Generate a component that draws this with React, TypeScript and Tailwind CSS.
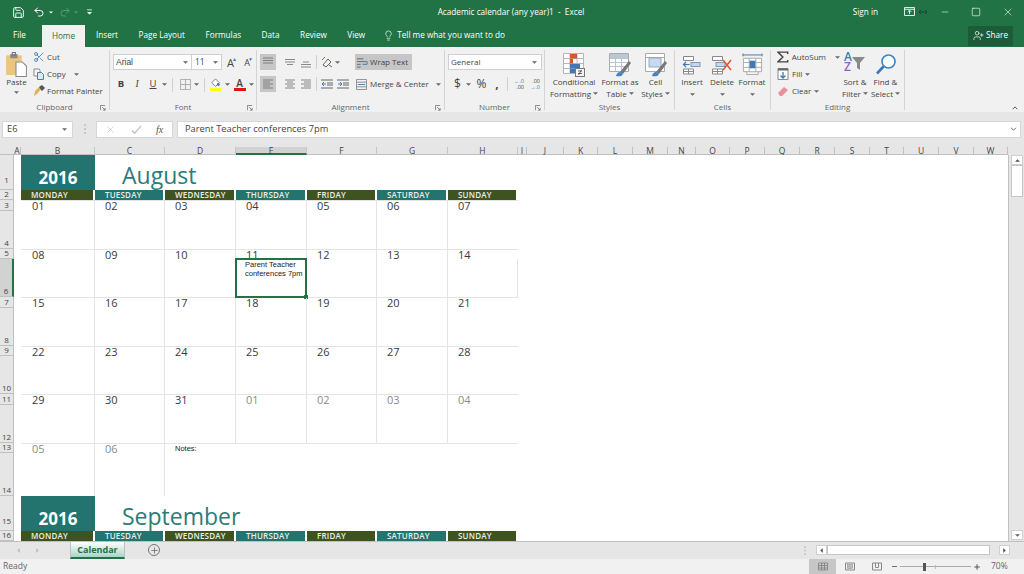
import { Lightbulb, Minus, Plus, Redo2, Save, Scissors, Square, Undo2, UserPlus, X } from "lucide-react";
import type { ReactNode } from "react";

const dayWidths = ["w-[74px]", "w-[70px]", "w-[71px]", "w-[71px]", "w-[70px]", "w-[71px]", "w-[70px]"];
const dayNames = ["MONDAY", "TUESDAY", "WEDNESDAY", "THURSDAY", "FRIDAY", "SATURDAY", "SUNDAY"];
const otherCols: [string, string][] = [
  ["I", "w-[9px]"], ["J", "w-[37px]"], ["K", "w-[34px]"], ["L", "w-[35px]"], ["M", "w-[35px]"], ["N", "w-[28px]"],
  ["O", "w-[34px]"], ["P", "w-[35px]"], ["Q", "w-[35px]"], ["R", "w-[35px]"], ["S", "w-[35px]"], ["T", "w-[34px]"],
  ["U", "w-[35px]"], ["V", "w-[35px]"], ["W", "w-[34px]"],
];
const rowHeights = [
  "h-[35px]", "h-[10px]", "h-[11px]", "h-[38px]", "h-[10px]", "h-[38px]", "h-[11px]", "h-[38px]",
  "h-[10px]", "h-[38px]", "h-[11px]", "h-[38px]", "h-[10px]", "h-[43px]", "h-[35px]", "h-[10px]",
];
const weeks = [
  ["01", "02", "03", "04", "05", "06", "07"],
  ["08", "09", "10", "11", "12", "13", "14"],
  ["15", "16", "17", "18", "19", "20", "21"],
  ["22", "23", "24", "25", "26", "27", "28"],
  ["29", "30", "31", "01", "02", "03", "04"],
];

function Caret({ className = "" }: { className?: string }) {
  return (
    <svg viewBox="0 0 6 3" className={`h-[3px] w-[5px] shrink-0 ${className}`}>
      <path d="M0 0h6L3 3z" fill="#666" />
    </svg>
  );
}

function LaunchMark() {
  return (
    <svg viewBox="0 0 7 7" className="absolute -bottom-[1px] right-[3px] h-[6px] w-[6px]">
      <path d="M.5 6V.5H6M2.5 2.5L6 6M6 3.5V6H3.5" fill="none" stroke="#777" strokeWidth="1" />
    </svg>
  );
}

function Group({ label, width, launcher, children }: { label: string; width: string; launcher?: boolean; children: ReactNode }) {
  return (
    <div className={`relative flex h-[60px] flex-col border-r border-[#d4d4d4] ${width}`}>
      <div className="flex h-[50px] flex-1">{children}</div>
      <div className="-mb-[2px] text-center text-[8px] leading-[10px] text-[#666]">{label}</div>
      {launcher && <LaunchMark />}
    </div>
  );
}

function AlignIcon({ rows, active, width = "w-[16px]" }: { rows: [number, number, number][]; active?: boolean; width?: string }) {
  return (
    <div className={`flex h-[16px] items-center justify-center ${width} ${active ? "bg-[#c6c6c6]" : ""}`}>
      <svg viewBox="0 0 12 12" className="h-[12px] w-[12px]">
        {rows.map(([x1, x2, y]) => (
          <path key={`${x1}-${y}`} d={`M${x1} ${y}H${x2}`} stroke="#6d6d6d" strokeWidth=".8" />
        ))}
      </svg>
    </div>
  );
}

function BigButton({ icon, lines, width }: { icon: ReactNode; lines: string[]; width: string }) {
  return (
    <div className={`flex flex-col items-center pt-[2px] ${width}`}>
      <div className="flex h-[25px] items-center justify-center">{icon}</div>
      <div className="flex h-[10px] items-center whitespace-nowrap text-[8px] text-[#444]">{lines[0]}</div>
      <div className="mt-[1px] flex h-[11px] items-center gap-[2px] whitespace-nowrap text-[8px] text-[#444]">
        {lines[1]}
        <Caret />
      </div>
    </div>
  );
}

function Ribbon() {
  const vsep = <div className="mx-[5px] h-[14px] w-px bg-[#d0d0d0]" />;
  return (
    <div className="flex h-[65px] items-start bg-[#f1f1f1] pt-[3px]">
      <Group label="Clipboard" width="w-[110px]" launcher>
        <div className="flex w-[33px] flex-col items-center pt-[2px]">
          <svg viewBox="0 0 20 24" className="h-[25px] w-[21px]">
            <rect x="0" y="3" width="15" height="19" rx="1" fill="#eec57f" />
            <rect x="4" y="2" width="7" height="4" fill="#8b8b8b" />
            <rect x="6" y="0.5" width="3" height="2.5" fill="none" stroke="#777" />
            <path d="M9.5 9.5h6l4 4v10h-10z" fill="#fff" stroke="#888" />
          </svg>
          <span className="-mt-[1px] text-[8px] leading-[11px] text-[#444]">Paste</span>
          <Caret className="mt-[4px]" />
        </div>
        <div className="-mt-[1px] flex flex-col gap-[1px] text-[8px] text-[#444]">
          <div className="flex h-[16px] items-center gap-[2px]">
            <Scissors className="h-[12px] w-[12px] text-[#3f78b5]" strokeWidth={1.6} />
            <span>Cut</span>
          </div>
          <div className="flex h-[16px] items-center gap-[2px]">
            <svg viewBox="0 0 12 12" className="h-[12px] w-[12px]">
              <path d="M1 1h5l1 1v2M1 1v7h3" fill="#fff" stroke="#888" />
              <path d="M4.5 4.5h4l2 2v5h-6z" fill="#dbe8f5" stroke="#4c7fb5" />
            </svg>
            <span>Copy</span>
            <Caret className="ml-[6px]" />
          </div>
          <div className="flex h-[16px] items-center gap-[2px]">
            <svg viewBox="0 0 12 12" className="h-[12px] w-[12px]">
              <path d="M1 11l3-2 4-5-2-2-4 4z" fill="#e3b15b" />
              <path d="M6 2l3-2 3 3-3 3-1-1z" fill="#555" />
            </svg>
            <span className="whitespace-nowrap">Format Painter</span>
          </div>
        </div>
      </Group>

      <Group label="Font" width="w-[147px]" launcher>
        <div className="flex flex-col pl-[3px] pt-[4px] text-[#444]">
          <div className="flex h-[16px] items-center">
            <div className="flex h-[16px] w-[79px] items-center justify-between border border-[#d0d0d0] bg-white pl-[2px] pr-[3px] font-['Liberation_Sans',sans-serif] text-[8.5px]">
              Arial <Caret />
            </div>
            <div className="flex h-[16px] w-[30px] items-center justify-between border border-l-0 border-[#d0d0d0] bg-white pl-[3px] pr-[3px] text-[8.5px]">
              11 <Caret />
            </div>
            <div className="ml-[5px] flex w-[23px] items-center justify-between">
              <span className="relative text-[11px] leading-none">A<span className="absolute -right-[3px] top-0 text-[5px] text-[#3f78b5]">▲</span></span>
              <span className="relative text-[9px] leading-none">A<span className="absolute -right-[3px] -top-[1px] text-[5px] text-[#3f78b5]">▼</span></span>
            </div>
          </div>
          <div className="mt-[7px] flex h-[15px] items-center text-[9.5px]">
            <span className="w-[16px] text-center font-bold">B</span>
            <span className="w-[16px] text-center font-['Liberation_Serif',serif] italic">I</span>
            <span className="w-[16px] text-center underline">U</span>
            <Caret className="ml-[1px]" />
            {vsep}
            <svg viewBox="0 0 12 12" className="ml-[2px] h-[11px] w-[11px]">
              <path d="M.5.5h11v11H.5zM6 .5v11M.5 6h11" fill="none" stroke="#a9a9a9" />
            </svg>
            <Caret className="ml-[3px]" />
            {vsep}
            <svg viewBox="0 0 14 14" className="-ml-[1px] h-[13px] w-[13px]">
              <path d="M7 1l4 4-4 4-4-4z" fill="#fff" stroke="#777" />
              <circle cx="10" cy="7" r="1.5" fill="#3f78b5" />
              <rect x="1" y="11" width="12" height="3" fill="#ffff00" />
            </svg>
            <Caret className="ml-[3px]" />
            <div className="ml-[3px] flex w-[13px] flex-col items-center leading-[9px]">
              <span className="text-[10px] font-semibold">A</span>
              <span className="h-[3px] w-[12px] bg-[#e81313]" />
            </div>
            <Caret className="ml-[3px]" />
          </div>
        </div>
      </Group>

      <Group label="Alignment" width="w-[188px]" launcher>
        <div className="flex flex-col pl-[3px] pt-[4px] text-[#444]">
          <div className="flex h-[16px] items-center">
            <AlignIcon active rows={[[1, 11, 2], [1, 11, 4.5], [1, 11, 7]]} />
            <div className="w-[7px]" />
            <AlignIcon rows={[[1, 11, 3.5], [1, 11, 6], [3, 9, 8.5]]} width="w-[14px]" />
            <div className="w-[2px]" />
            <AlignIcon rows={[[3, 9, 6], [1, 11, 8.5], [1, 11, 11]]} width="w-[14px]" />
            <div className="ml-[3px] mr-[4px] h-[14px] w-px bg-[#d0d0d0]" />
            <svg viewBox="0 0 12 12" className="h-[12px] w-[12px]">
              <path d="M2 9l5-6 3 3-5 5zM8 9l3 2" fill="none" stroke="#666" />
              <path d="M1 4l3-3" stroke="#3f78b5" />
            </svg>
            <Caret className="ml-[2px]" />
            <div className="ml-[15px] flex h-[16px] w-[57px] items-center gap-[2px] bg-[#c6c6c6] pl-[2px] text-[8px]">
              <svg viewBox="0 0 12 12" className="h-[11px] w-[11px] shrink-0">
                <path d="M0 2h7M0 5h9M0 8h4M0 11h4" stroke="#666" />
                <path d="M9 5h2v3H6" fill="none" stroke="#3f78b5" />
              </svg>
              Wrap Text
            </div>
          </div>
          <div className="mt-[6px] flex h-[16px] items-center">
            <AlignIcon active rows={[[1, 11, 2], [1, 8, 4], [1, 11, 6], [1, 8, 8], [1, 11, 10]]} />
            <div className="w-[7px]" />
            <AlignIcon rows={[[1, 11, 2], [3, 9, 4], [1, 11, 6], [3, 9, 8], [1, 11, 10]]} width="w-[14px]" />
            <div className="w-[2px]" />
            <AlignIcon rows={[[1, 11, 2], [4, 11, 4], [1, 11, 6], [4, 11, 8], [1, 11, 10]]} width="w-[14px]" />
            <div className="ml-[3px] mr-[4px] h-[14px] w-px bg-[#d0d0d0]" />
            <svg viewBox="0 0 12 12" className="h-[12px] w-[12px]">
              <path d="M0 2h12M6 5h6M6 7h6M0 10h12" stroke="#666" />
              <path d="M5 6H1M3 4L1 6l2 2" fill="none" stroke="#3f78b5" />
            </svg>
            <svg viewBox="0 0 12 12" className="ml-[4px] h-[12px] w-[12px]">
              <path d="M0 2h12M6 5h6M6 7h6M0 10h12" stroke="#666" />
              <path d="M1 6h4M3 4l2 2-2 2" fill="none" stroke="#3f78b5" />
            </svg>
            <div className="ml-[7px] flex items-center gap-[3px] text-[8px]">
              <svg viewBox="0 0 12 12" className="h-[11px] w-[11px] shrink-0">
                <path d="M.5.5h11v11H.5zM.5 3.500h11M.5 8.500h11" fill="none" stroke="#888" />
                <path d="M2 6h8" stroke="#3f78b5" />
              </svg>
              <span className="whitespace-nowrap">Merge &amp; Center</span>
            </div>
            <Caret className="ml-[7px]" />
          </div>
        </div>
      </Group>

      <Group label="Number" width="w-[100px]" launcher>
        <div className="flex flex-col pl-[3px] pt-[4px] text-[#444]">
          <div className="flex h-[16px] w-[94px] items-center justify-between border border-[#d0d0d0] bg-white pl-[2px] pr-[4px] text-[8px]">
            General <Caret />
          </div>
          <div className="mt-[6px] flex h-[16px] items-center pl-[5px] text-[12px]">
            <span className="w-[9px] text-center">$</span>
            <Caret className="ml-[4px]" />
            <span className="ml-[4px] w-[13px] text-center">%</span>
            <span className="ml-[5px] w-[8px] text-center font-bold">,</span>
            <div className="ml-[6px] h-[14px] w-px bg-[#d0d0d0]" />
            <div className="ml-[4px] flex w-[12px] flex-col text-right text-[5.5px] leading-[6px]">
              <span className="text-[#3f78b5]">←.0</span>
              <span>.00</span>
            </div>
            <div className="ml-[4px] flex w-[12px] flex-col text-right text-[5.5px] leading-[6px]">
              <span>.00</span>
              <span className="text-[#3f78b5]">→.0</span>
            </div>
          </div>
        </div>
      </Group>

      <Group label="Styles" width="w-[130px]">
        <BigButton
          width="w-[58px]"
          lines={["Conditional", "Formatting"]}
          icon={
            <svg viewBox="0 0 22 24" className="h-[24px] w-[22px]">
              <path d="M.5.5h20v20H.5zM.5 5.500h20M.5 10.500h20M.5 15.500h20M7 .5v20M14 .5v20" fill="#fff" stroke="#b5b5b5" />
              <rect x="7" y="1" width="7" height="4.500" fill="#d8542f" />
              <rect x="7" y="6" width="3" height="4.500" fill="#d8542f" />
              <rect x="7" y="11" width="10" height="4.500" fill="#3f78b5" />
              <rect x="7" y="16" width="5" height="4" fill="#3f78b5" />
              <rect x="12.500" y="15.500" width="9" height="8" fill="#f5f5f5" stroke="#777" />
              <path d="M15 18h4M15 20.500h4M18.500 17l-3 5" stroke="#444" strokeWidth=".8" />
            </svg>
          }
        />
        <BigButton
          width="w-[34px]"
          lines={["Format as", "Table"]}
          icon={
            <svg viewBox="0 0 22 24" className="h-[24px] w-[22px]">
              <path d="M.5.5h19v18H.5z" fill="#fff" stroke="#aaa" />
              <rect x="1" y="1" width="18" height="4" fill="#bcc7d6" />
              <path d="M1 5.500h18M1 9.500h18M1 13.500h18M6.500 1v17M12.500 1v17" stroke="#b8c5d6" />
              <path d="M11 19l9-11 2 2-8 11z" fill="#777" />
              <path d="M7 23c1-4 4-5 6-3s-1 4-6 3z" fill="#3f86c9" />
            </svg>
          }
        />
        <BigButton
          width="w-[37px]"
          lines={["Cell", "Styles"]}
          icon={
            <svg viewBox="0 0 22 24" className="h-[24px] w-[22px]">
              <path d="M.5.5h19v18H.5z" fill="#fff" stroke="#aaa" />
              <path d="M1 4.500h18" stroke="#aaa" />
              <rect x="4" y="5" width="12" height="9" fill="#c9daf0" stroke="#9ab" />
              <path d="M11 19l9-11 2 2-8 11z" fill="#777" />
              <path d="M7 23c1-4 4-5 6-3s-1 4-6 3z" fill="#3f86c9" />
            </svg>
          }
        />
      </Group>

      <Group label="Cells" width="w-[96px]">
        {[
          ["Insert", "w-[34px]"],
          ["Delete", "w-[26px]"],
          ["Format", "w-[34px]"],
        ].map(([name, w], i) => (
          <div key={name} className={`flex flex-col items-center pt-[2px] ${w}`}>
            <div className="flex h-[25px] items-center justify-center">
              {i === 0 && (
                <svg viewBox="0 0 20 20" className="h-[20px] w-[20px]">
                  <path d="M1.500 1.500h10v4h-10zM1.500 14h10v5h-10zM6.500 14v5M1.500 16.500h10" fill="#fff" stroke="#888" />
                  <rect x="9" y="7.500" width="9" height="4" fill="#c4d7ec" stroke="#7e9cbd" />
                  <path d="M7.500 9.500H1.500M4 7L1.500 9.500 4 12" fill="none" stroke="#3f78b5" strokeWidth="1.200" />
                </svg>
              )}
              {i === 1 && (
                <svg viewBox="0 0 22 20" className="h-[20px] w-[22px]">
                  <path d="M1.500 1.500h10v4h-10zM1.500 14h10v5h-10zM6.500 14v5M1.500 16.500h10" fill="#fff" stroke="#888" />
                  <rect x="5" y="7.500" width="9" height="4" fill="#c4d7ec" stroke="#7e9cbd" />
                  <path d="M12 5l8 10M20 5l-8 10" stroke="#dd5a36" strokeWidth="1.600" />
                </svg>
              )}
              {i === 2 && (
                <svg viewBox="0 0 22 24" className="h-[23px] w-[21px]">
                  <path d="M1 2h20M1 .5v3M21 .5v3" stroke="#3f78b5" />
                  <path d="M1.500 5.500h19v14h-19zM1.500 10h19M1.500 15h19M7.500 5.500v14M14.500 5.500v14" fill="#fff" stroke="#aaa" />
                  <rect x="8" y="8" width="6" height="8" fill="#3f78b5" />
                  <path d="M5 19.500v3h12v-3" fill="none" stroke="#aaa" />
                </svg>
              )}
            </div>
            <span className="h-[10px] text-[8px] leading-[10px] text-[#444]">{name}</span>
            <Caret className="mt-[6px]" />
          </div>
        ))}
      </Group>

      <Group label="Editing" width="w-[134px]">
        <div className="-mt-[1px] flex w-[69px] flex-col gap-[1px] pl-[6px] text-[8px] text-[#444]">
          <div className="flex h-[16px] items-center gap-[3px]">
            <svg viewBox="0 0 12 12" className="h-[12px] w-[12px]">
              <path d="M11 3V1H1l5 5-5 5h10V9" fill="none" stroke="#444" strokeWidth="1.500" />
            </svg>
            <span>AutoSum</span>
            <Caret className="ml-[6px]" />
          </div>
          <div className="flex h-[16px] items-center gap-[3px]">
            <svg viewBox="0 0 12 12" className="h-[12px] w-[12px]">
              <path d="M1 .5h10v11H1z" fill="#fff" stroke="#888" />
              <rect x="1" y="0.500" width="10" height="2" fill="#666" />
              <path d="M6 4v6M3.500 7.500L6 10l2.500-2.500" fill="none" stroke="#3f78b5" strokeWidth="1.300" />
            </svg>
            <span>Fill</span>
            <Caret />
          </div>
          <div className="flex h-[16px] items-center gap-[3px]">
            <svg viewBox="0 0 12 12" className="h-[12px] w-[12px]">
              <path d="M1 8l6-6 4 3-6 6H3z" fill="#e88f97" />
            </svg>
            <span>Clear</span>
            <Caret />
          </div>
        </div>
        <div className="flex w-[30px] flex-col items-center pt-[2px]">
          <svg viewBox="0 0 24 25" className="h-[25px] w-[24px] font-['Open_Sans',sans-serif] text-[12px] font-semibold">
            <text x="1" y="9" fill="#3f78b5">A</text>
            <text x="1" y="19" fill="#9b5fc0">Z</text>
            <path d="M9 5h13l-5 6v7l-3-2v-5z" fill="#8a8a8a" />
          </svg>
          <span className="h-[10px] whitespace-nowrap text-[8px] leading-[10px] text-[#444]">Sort &amp;</span>
          <span className="mt-[1px] flex h-[11px] items-center gap-[2px] whitespace-nowrap text-[8px] text-[#444]">Filter <Caret /></span>
        </div>
        <div className="flex w-[31px] flex-col items-center pt-[2px]">
          <svg viewBox="0 0 22 22" className="h-[25px] w-[22px]">
            <circle cx="13.500" cy="8" r="6.500" fill="#fff" stroke="#3f86c9" strokeWidth="1.700" />
            <path d="M8.500 13L2 20" stroke="#3f78b5" strokeWidth="2.600" />
          </svg>
          <span className="h-[10px] whitespace-nowrap text-[8px] leading-[10px] text-[#444]">Find &amp;</span>
          <span className="mt-[1px] flex h-[11px] items-center gap-[2px] whitespace-nowrap text-[8px] text-[#444]">Select <Caret /></span>
        </div>
      </Group>

      <div className="flex h-[60px] flex-1 items-end justify-end pr-[6px]">
        <svg viewBox="0 0 8 5" className="h-[4px] w-[6px]">
          <path d="M1 4l3-3 3 3" fill="none" stroke="#555" strokeWidth="1.300" />
        </svg>
      </div>
    </div>
  );
}

function FormulaBar() {
  return (
    <div className="flex h-[35px] items-center bg-[#e6e6e6] pb-[1px] pl-[2px] pr-[3px] text-[9.3px] text-[#444]">
      <div className="flex h-[17px] w-[71px] items-center justify-between border border-[#d6d6d6] bg-white pl-[4px] pr-[5px]">
        E6 <Caret />
      </div>
      <div className="flex w-[23px] justify-center">
        <svg viewBox="0 0 2 10" className="h-[10px] w-[2px]">
          <path d="M1 0v2M1 4v2M1 8v2" stroke="#aaa" />
        </svg>
      </div>
      <div className="flex h-[17px] w-[77px] items-center border border-[#d6d6d6] bg-white">
        <X className="ml-[8px] h-[11px] w-[11px] text-[#c4c4c4]" strokeWidth={1.5} />
        <svg viewBox="0 0 12 12" className="ml-[15px] h-[11px] w-[11px]">
          <path d="M1 7l3 3 7-8" fill="none" stroke="#c4c4c4" strokeWidth="1.500" />
        </svg>
        <span className="ml-[14px] font-['Liberation_Serif',serif] text-[10px] italic text-[#555]">fx</span>
      </div>
      <div className="ml-[4px] flex h-[17px] flex-1 items-center justify-between border border-[#d6d6d6] bg-white pl-[7px] pr-[3px]">
        Parent Teacher conferences 7pm
        <svg viewBox="0 0 8 5" className="h-[4px] w-[7px]">
          <path d="M1 1l3 3 3-3" fill="none" stroke="#666" strokeWidth="1.200" />
        </svg>
      </div>
    </div>
  );
}

function ColumnHeaders() {
  const names = ["B", "C", "D", "E", "F", "G", "H"];
  return (
    <div className="flex h-[8px] bg-[#e6e6e6] text-[8.5px] leading-[8px] text-[#444]">
      <div className="w-[14px] border-b border-[#c0c0c0]" />
      <div className="flex w-[7px] justify-center border-b border-r border-[#c0c0c0]">A</div>
      {names.map((n, i) => (
        <div
          key={n}
          className={`flex justify-center border-r border-[#c6c6c6] ${dayWidths[i]} ${n === "E" ? "border-b-2 border-b-[#217346] bg-[#d2d2d2]" : "border-b border-b-[#c0c0c0]"}`}
        >
          {n}
        </div>
      ))}
      {otherCols.map(([n, w]) => (
        <div key={n} className={`flex justify-center border-b border-r border-[#c0c0c0] ${w}`}>{n}</div>
      ))}
      <div className="flex-1" />
    </div>
  );
}

function RowHeaders() {
  return (
    <div className="flex w-[14px] shrink-0 flex-col bg-[#e6e6e6] text-[8px] leading-[10px] text-[#444]">
      {rowHeights.map((h, i) => (
        <div
          key={i}
          className={`flex items-end justify-center border-b border-r border-[#c0c0c0] ${h} ${i === 5 ? "border-r-2 border-r-[#217346] bg-[#d2d2d2]" : ""} ${i === 0 || i === 14 ? "pb-[4px]" : ""}`}
        >
          {i + 1}
        </div>
      ))}
    </div>
  );
}

function MonthHeader({ name }: { name: string }) {
  return (
    <>
      <div className="flex h-[35px]">
        <div className="flex w-[74px] items-end justify-center bg-[#23746e] pb-[1px] text-[17px] font-bold leading-[22px] text-white">2016</div>
        <div className="pl-[27px] pt-[7px] text-[23px] leading-[26px] text-[#2a7d78]">{name}</div>
      </div>
      <div className="flex h-[10px]">
        {dayNames.map((d, i) => (
          <div
            key={d}
            className={`border-r-2 border-white pl-[10px] text-[8px] font-semibold leading-[10px] tracking-[0.2px] text-[#e8efe6] ${dayWidths[i]} ${i % 2 === 0 ? "bg-[#3f5321]" : "bg-[#23746e]"}`}
          >
            {d}
          </div>
        ))}
      </div>
    </>
  );
}

function DayNumber({ value, muted, first }: { value: string; muted?: boolean; first?: boolean }) {
  return (
    <div className={`h-[9px] text-[11px] leading-[9px] ${first ? "pl-[11px]" : "pl-[10px]"} ${muted ? "text-[#8a8a8a]" : "text-[#3a3a3a]"}`}>
      {value}
    </div>
  );
}

function Week({ days, index }: { days: string[]; index: number }) {
  const height = index % 2 === 0 ? "h-[49px]" : "h-[48px]";
  return (
    <div className={`flex ${height} border-t border-[#e4e4e4] first:border-t-0`}>
      {days.map((d, i) => (
        <div key={i} className={`relative ${dayWidths[i]} ${i < 6 ? "border-r border-[#e4e4e4]" : ""}`}>
          <DayNumber value={d} muted={index === 4 && i >= 3} first={i === 0} />
          {index === 1 && i === 3 && (
            <div className="relative -ml-[1px] -mr-[1px] -mt-[1px] h-[40px] border-2 border-[#217346] bg-white pl-[8px] font-['Liberation_Sans',sans-serif] text-[7.5px] leading-[9px] text-[#222]">
              Parent Teacher
              <br />
              conferences 7pm
              <div className="absolute -bottom-[3px] -right-[3px] h-[4px] w-[4px] bg-[#217346]" />
            </div>
          )}
          {index === 1 && i === 6 && <div className="h-[38px] border-r border-[#e4e4e4]" />}
        </div>
      ))}
    </div>
  );
}

function Sheet() {
  return (
    <div className="flex min-w-0 flex-1 bg-white">
      <RowHeaders />
      <div className="w-[7px] shrink-0" />
      <div className="w-[497px]">
        <MonthHeader name="August" />
        {weeks.map((days, i) => (
          <Week key={i} days={days} index={i} />
        ))}
        <div className="flex h-[53px] border-t border-[#e4e4e4]">
          <div className="w-[74px] border-r border-[#e4e4e4]"><DayNumber value="05" muted first /></div>
          <div className="w-[70px] border-r border-[#e4e4e4]"><DayNumber value="06" muted /></div>
          <div className="pl-[10px] font-['Liberation_Sans',sans-serif] text-[7.5px] leading-[9px] text-[#222]">Notes:</div>
        </div>
        <MonthHeader name="September" />
      </div>
    </div>
  );
}

function VerticalScroll() {
  return (
    <div className="flex w-[16px] shrink-0 flex-col items-end border-l border-[#c0c0c0] bg-[#e6e6e6] pb-[1px] pr-[1px]">
      <div className="flex h-[10px] w-[12px] items-center justify-center border border-[#d0d0d0] bg-white">
        <svg viewBox="0 0 6 3" className="h-[3px] w-[5px]"><path d="M0 3h6L3 0z" fill="#555" /></svg>
      </div>
      <div className="h-[32px] w-[12px] border border-[#c6c6c6] bg-white" />
      <div className="flex-1" />
      <div className="flex h-[10px] w-[12px] items-center justify-center border border-[#d0d0d0] bg-white">
        <Caret />
      </div>
    </div>
  );
}

function SheetTabs() {
  return (
    <div className="flex h-[18px] items-start border-t border-[#c0c0c0] bg-[#e6e6e6]">
      <div className="flex h-[17px] w-[70px] items-center gap-[16px] pl-[17px] text-[#bcbcbc]">
        <svg viewBox="0 0 3 6" className="h-[5px] w-[3px]"><path d="M3 0v6L0 3z" fill="currentColor" /></svg>
        <svg viewBox="0 0 3 6" className="h-[5px] w-[3px]"><path d="M0 0v6l3-3z" fill="currentColor" /></svg>
      </div>
      <div className="flex h-[17px] w-[55px] items-center justify-center border-x border-b-2 border-x-[#c0c0c0] border-b-[#217346] bg-gradient-to-b from-white to-[#a9d3ca] text-[9px] font-bold text-[#217346]">
        Calendar
      </div>
      <div className="ml-[23px] mt-[2px] flex h-[12px] w-[12px] items-center justify-center rounded-full border border-[#777]">
        <Plus className="h-[9px] w-[9px] text-[#666]" strokeWidth={2} />
      </div>
      <div className="flex-1" />
      <svg viewBox="0 0 2 10" className="mr-[10px] mt-[4px] h-[9px] w-[2px]">
        <path d="M1 0v2M1 4v2M1 8v2" stroke="#aaa" />
      </svg>
      <div className="mr-[14px] mt-[3px] flex h-[10px] w-[194px] items-stretch">
        <div className="flex w-[11px] items-center justify-center border border-[#d0d0d0] bg-white">
          <svg viewBox="0 0 3 6" className="h-[5px] w-[3px]"><path d="M3 0v6L0 3z" fill="#555" /></svg>
        </div>
        <div className="w-[163px] border border-[#c6c6c6] bg-white" />
        <div className="flex-1" />
        <div className="flex w-[11px] items-center justify-center border border-[#d0d0d0] bg-white">
          <svg viewBox="0 0 3 6" className="h-[5px] w-[3px]"><path d="M0 0v6l3-3z" fill="#555" /></svg>
        </div>
      </div>
    </div>
  );
}

function StatusBar() {
  return (
    <div className="flex h-[15px] items-center bg-[#f1f1f1] pl-[3px] text-[8.5px] text-[#666]">
      <span>Ready</span>
      <div className="flex-1" />
      <div className="flex h-[15px] w-[27px] items-center justify-center bg-[#c6c6c6]">
        <svg viewBox="0 0 10 8" className="h-[9px] w-[10px]">
          <path d="M.5.5h9v7h-9zM3.500.5v7M6.500.5v7M.5 3h9M.5 5.500h9" fill="none" stroke="#777" strokeWidth=".7" />
        </svg>
      </div>
      <div className="flex w-[27px] items-center justify-center">
        <svg viewBox="0 0 10 8" className="h-[9px] w-[10px]">
          <path d="M.5.5h9v7h-9z" fill="none" stroke="#888" />
          <rect x="2.500" y="2" width="5" height="4" fill="#bbb" stroke="#888" strokeWidth=".5" />
        </svg>
      </div>
      <div className="flex w-[27px] items-center justify-center">
        <svg viewBox="0 0 10 8" className="h-[9px] w-[10px]">
          <path d="M.5.5h9v7h-9zM3.500.5v4.500h3V.5" fill="none" stroke="#888" />
        </svg>
      </div>
      <Minus className="ml-[1px] h-[7px] w-[7px] text-[#555]" strokeWidth={3} />
      <div className="relative mx-[2px] flex h-[15px] w-[71px] items-center">
        <div className="h-px w-full bg-[#aaa]" />
        <div className="absolute left-[23px] h-[8px] w-[3px] bg-[#555]" />
        <div className="absolute left-[35px] h-[4px] w-px bg-[#bbb]" />
      </div>
      <Plus className="h-[8px] w-[8px] text-[#555]" strokeWidth={3} />
      <span className="ml-[10px] mr-[17px] w-[16px] text-right">70%</span>
    </div>
  );
}

export default function App() {
  return (
    <div className="flex h-[574px] w-[1024px] flex-col overflow-hidden bg-white font-['Open_Sans',sans-serif]">
      <div className="bg-[#217346] text-white">
        <div className="grid h-[24px] grid-cols-[1fr_auto_1fr] items-center text-[8.2px]">
          <div className="flex items-center pl-[12px]">
            <Save className="h-[13px] w-[13px]" strokeWidth={1.7} />
            <Undo2 className="ml-[8px] h-[12px] w-[12px]" strokeWidth={2} />
            <svg viewBox="0 0 6 3" className="ml-[4px] h-[3px] w-[4px]"><path d="M0 0h6L3 3z" fill="#fff" /></svg>
            <Redo2 className="ml-[6px] h-[12px] w-[12px] text-[#5c9a78]" strokeWidth={2} />
            <svg viewBox="0 0 6 3" className="ml-[3px] h-[3px] w-[4px]"><path d="M0 0h6L3 3z" fill="#5c9a78" /></svg>
            <svg viewBox="0 0 6 6" className="ml-[9px] h-[6px] w-[5px]"><path d="M0 0h6v1H0zM0 3h6L3 6z" fill="#fff" /></svg>
          </div>
          <div className="pr-[2px]">Academic calendar (any year)1 &nbsp;-&nbsp; Excel</div>
          <div className="flex items-center justify-end">
            <span>Sign in</span>
            <svg viewBox="0 0 12 10" className="ml-[26px] h-[9px] w-[11px]">
              <path d="M.5.5h11v9H.5zM.5 2.500h11" fill="none" stroke="#fff" />
              <path d="M6 8V4M4 5.500L6 3.500l2 2" fill="none" stroke="#fff" />
            </svg>
            <svg viewBox="0 0 10 6" className="ml-[4px] h-[6px] w-[8px]">
              <path d="M0 3h10M2.500.5L0 3l2.500 2.500M7.500.5L10 3 7.500 5.500" fill="none" stroke="#1c3d2b" />
            </svg>
            <Minus className="ml-[13px] h-[10px] w-[10px]" strokeWidth={1.3} />
            <Square className="ml-[21px] h-[10px] w-[10px]" strokeWidth={1.5} />
            <X className="ml-[21px] mr-[10px] h-[12px] w-[12px]" strokeWidth={1.2} />
          </div>
        </div>
        <div className="flex h-[23px] items-center pl-[13px] text-[8.2px]">
          <span>File</span>
          <div className="ml-[16px] flex h-[22px] w-[43px] items-center justify-center self-end bg-[#f1f1f1] font-medium text-[#217346]">Home</div>
          <div className="ml-[11px] flex items-center gap-[20.5px]">
            <span>Insert</span>
            <span>Page Layout</span>
            <span>Formulas</span>
            <span>Data</span>
            <span>Review</span>
            <span>View</span>
          </div>
          <Lightbulb className="ml-[18px] h-[11px] w-[11px]" strokeWidth={1.5} />
          <span className="ml-[3px]">Tell me what you want to do</span>
          <div className="flex-1" />
          <div className="mr-[11px] flex h-[20px] w-[45px] items-center justify-center gap-[2px] bg-[#1c5c38]">
            <UserPlus className="h-[11px] w-[11px]" strokeWidth={1.5} />
            Share
          </div>
        </div>
      </div>
      <Ribbon />
      <FormulaBar />
      <ColumnHeaders />
      <div className="flex h-[386px]">
        <Sheet />
        <VerticalScroll />
      </div>
      <SheetTabs />
      <StatusBar />
    </div>
  );
}
